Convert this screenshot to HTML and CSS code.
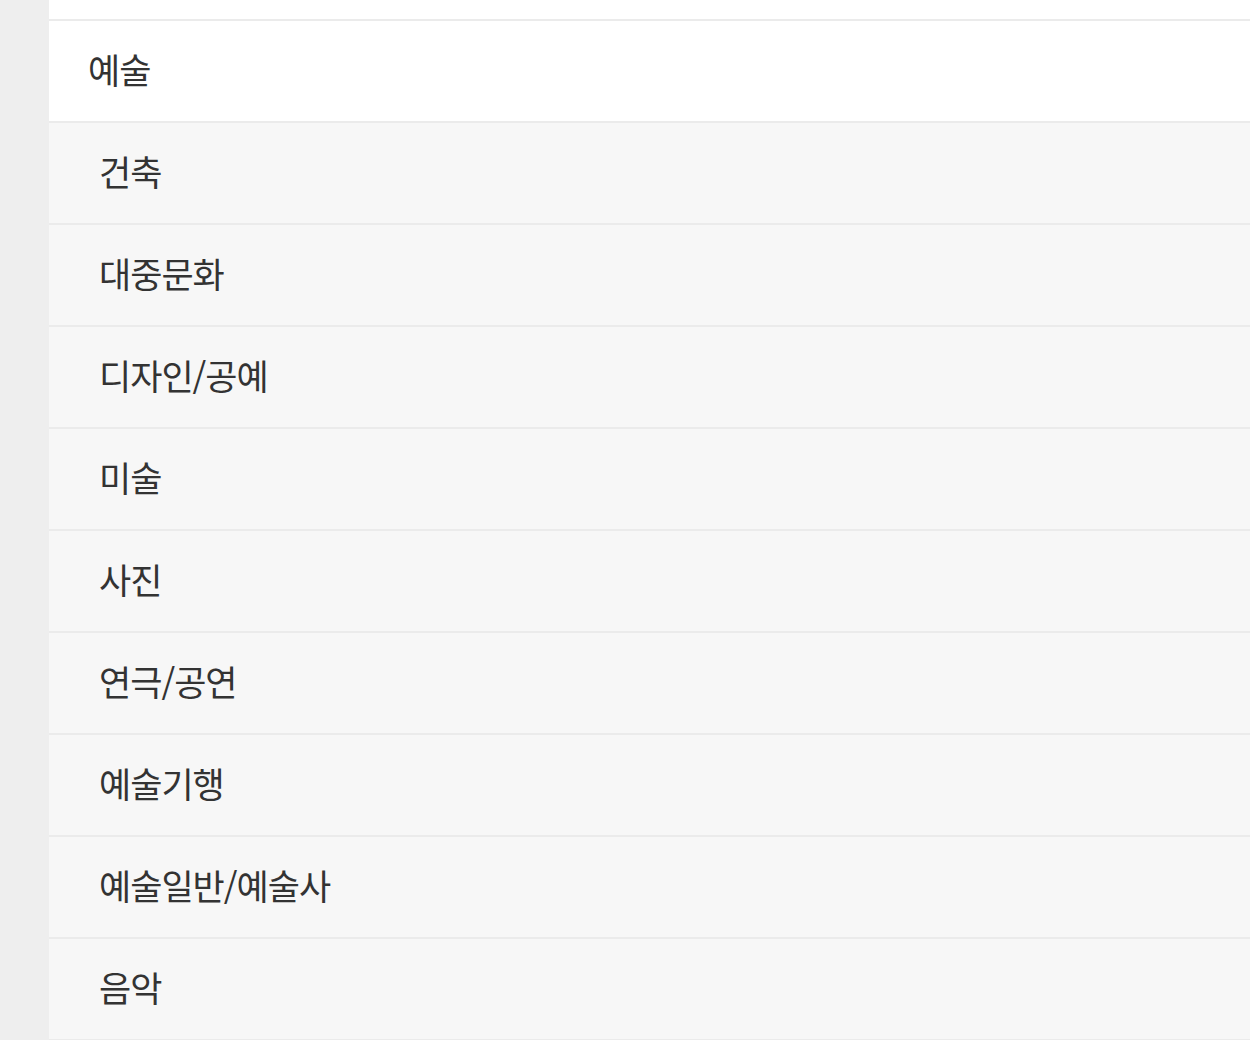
FILE: index.html
```html
<!DOCTYPE html>
<html lang="ko">
<head>
    <meta charset="UTF-8">
    <title>예술</title>
    <link rel="stylesheet" href="styles.css">
</head>
<body>
    <div class="page">
        <div class="side"></div>
        <div class="menu">
            <div class="row row-top"></div>
            <div class="row row-main">예술</div>
            <div class="row row-sub">건축</div>
            <div class="row row-sub">대중문화</div>
            <div class="row row-sub">디자인/공예</div>
            <div class="row row-sub">미술</div>
            <div class="row row-sub">사진</div>
            <div class="row row-sub">연극/공연</div>
            <div class="row row-sub">예술기행</div>
            <div class="row row-sub">예술일반/예술사</div>
            <div class="row row-sub">음악</div>
        </div>
    </div>
</body>
</html>
```

FILE: styles.css
```css
body {
    margin: 0;
    font-family: "Noto Sans CJK KR", "Noto Sans", sans-serif;
    color: #333;
    background-color: #ffffff;
}
.page {
    display: flex;
    height: 1040px;
    overflow: hidden;
}
.side {
    width: 49px;
    flex-shrink: 0;
    background-color: #eeeeee;
}
.menu {
    flex: 1;
}
.row {
    display: flex;
    align-items: center;
    box-sizing: border-box;
    height: 102px;
    padding-bottom: 6px;
    border-bottom: 2px solid #ebebeb;
    font-size: 35px;
    line-height: 1;
    letter-spacing: -1px;
}
.row-top {
    height: 21px;
    padding-bottom: 0;
    background-color: #ffffff;
}
.row-main {
    padding-left: 39px;
    background-color: #ffffff;
}
.row-sub {
    padding-left: 50px;
    background-color: #f7f7f7;
}
```
